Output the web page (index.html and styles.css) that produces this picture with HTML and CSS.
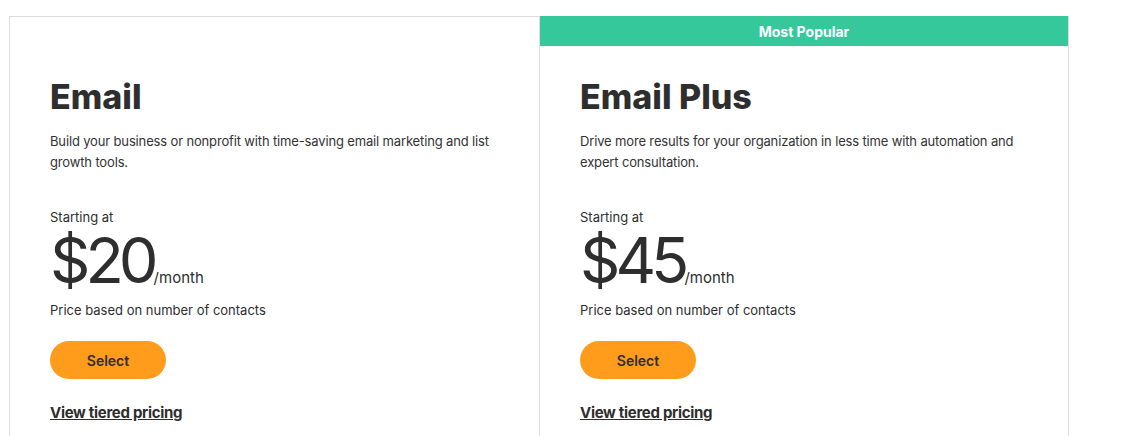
FILE: index.html
```html
<!DOCTYPE html>
<html lang="en">
<head>
<meta charset="UTF-8" />
<meta name="viewport" content="width=device-width, initial-scale=1" />
<title>Email Plans</title>
<link rel="stylesheet" href="styles.css">
</head>
<body>

<div class="plans">
  <div class="plan">
    <div class="badge"></div>
    <div class="plan-body">
      <h2 class="plan-name">Email</h2>
      <p class="plan-desc">Build your business or nonprofit with time-saving email marketing and list growth tools.</p>
      <div class="starting">Starting at</div>
      <div class="price"><span class="amount">$20</span><span class="per">/month</span></div>
      <div class="price-note">Price based on number of contacts</div>
      <button class="select">Select</button>
      <a class="tiers" href="#">View tiered pricing</a>
    </div>
  </div>

  <div class="plan popular">
    <div class="badge">Most Popular</div>
    <div class="plan-body">
      <h2 class="plan-name">Email Plus</h2>
      <p class="plan-desc">Drive more results for your organization in less time with automation and expert consultation.</p>
      <div class="starting">Starting at</div>
      <div class="price"><span class="amount">$45</span><span class="per">/month</span></div>
      <div class="price-note">Price based on number of contacts</div>
      <button class="select">Select</button>
      <a class="tiers" href="#">View tiered pricing</a>
    </div>
  </div>
</div>

</body>
</html>
```

FILE: styles.css
```css
body {
  margin: 0;
  background: #fff;
  color: #2e2e2e;
  font-family: Inter, "Open Sans", sans-serif;
}
.plans {
  display: grid;
  grid-template-columns: 531px 529px;
  margin: 16px 0 0 9px;
  height: 420px;
}
.plan {
  border-right: 1px solid #dcdcdc;
}
.plan:first-child {
  border-top: 1px solid #dcdcdc;
  border-left: 1px solid #dcdcdc;
}
.plan:first-child .badge {
  height: 29px;
}
.badge {
  height: 30px;
  line-height: 31px;
  text-align: center;
  color: #fff;
  font-size: 14px;
  font-weight: 700;
}
.popular .badge {
  background: #35c89b;
}
.plan-body {
  padding: 31px 40px 0;
}
.plan-name {
  margin: 0;
  font-size: 34px;
  line-height: 40px;
  font-weight: 800;
}
.plan-desc {
  margin: 14px 0 0;
  font-size: 13px;
  line-height: 21px;
  letter-spacing: -0.15px;
  color: #333;
}
.starting {
  margin-top: 34px;
  font-size: 13px;
  line-height: 21px;
}
.price {
  height: 64px;
  font-size: 63px;
  line-height: 64px;
}
.amount {
  letter-spacing: -5px;
}
.per {
  font-size: 15px;
}
.price-note {
  margin-top: 8px;
  font-size: 13px;
  line-height: 21px;
}
.select {
  display: block;
  margin-top: 20px;
  width: 116px;
  height: 38px;
  border: none;
  border-radius: 19px;
  background: #ff9c1c;
  color: #2e2e2e;
  font-family: inherit;
  font-size: 14px;
  font-weight: 600;
  cursor: pointer;
}
.tiers {
  display: inline-block;
  margin-top: 23px;
  font-size: 15px;
  line-height: 22px;
  font-weight: 700;
  color: #2e2e2e;
  letter-spacing: -0.3px;
}
```
